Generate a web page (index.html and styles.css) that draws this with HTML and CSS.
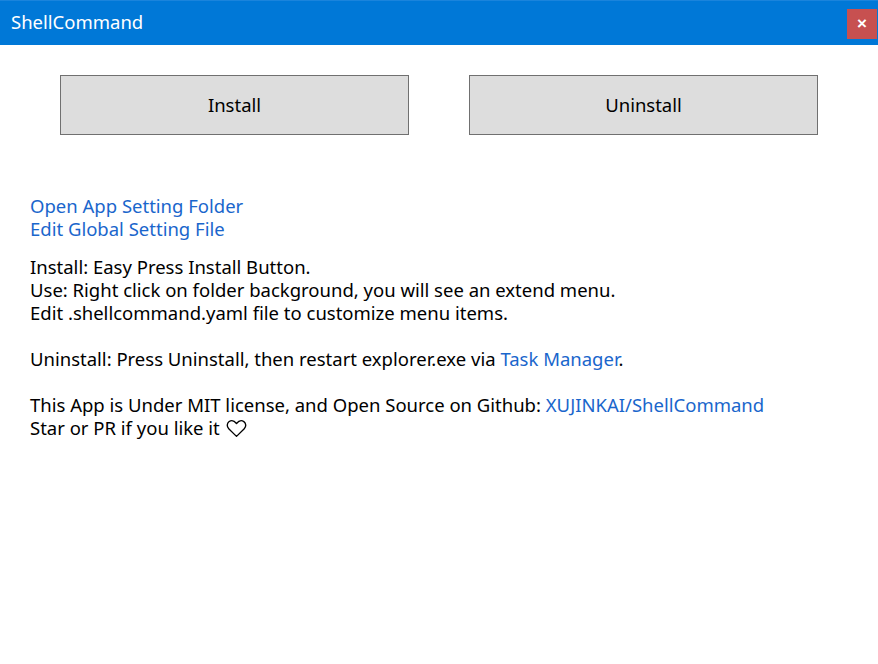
FILE: index.html
```html
<!DOCTYPE html>
<html>
<head>
<meta charset="utf-8">
<link rel="stylesheet" href="styles.css">
</head>
<body>
<div class="window">
  <header class="titlebar">
    <span class="title">ShellCommand</span>
    <button class="close">×</button>
  </header>
  <main class="content">
    <div class="buttons">
      <button class="btn">Install</button>
      <button class="btn">Uninstall</button>
    </div>
    <div class="links">
      <a class="link">Open App Setting Folder</a>
      <a class="link">Edit Global Setting File</a>
    </div>
    <div class="text">
      <p>Install: Easy Press Install Button.<br>Use: Right click on folder background, you will see an extend menu.<br>Edit .shellcommand.yaml file to customize menu items.</p>
      <p>Uninstall: Press Uninstall, then restart explorer.exe via <a class="link">Task Manager</a>.</p>
      <p>This App is Under MIT license, and Open Source on Github: <a class="link">XUJINKAI/ShellCommand</a><br>Star or PR if you like it <svg class="heart" width="21" height="19" viewBox="0 0 20 18"><path d="M10 16.5 L2.6 9.2 C0.6 7.2 0.8 4 3 2.4 C5 1 7.8 1.5 10 4.2 C12.2 1.5 15 1 17 2.4 C19.2 4 19.4 7.2 17.4 9.2 Z" fill="none" stroke="#000" stroke-width="1.3" stroke-linejoin="round"/></svg></p>
    </div>
  </main>
</div>
</body>
</html>
```
FILE: styles.css
```css
* { box-sizing: border-box; }
html, body { margin: 0; padding: 0; background: #fff; }
body { font-family: "Segoe UI", "Noto Sans", "Open Sans", sans-serif; color: #000; }
.window { width: 878px; height: 664px; display: flex; flex-direction: column; }
.titlebar {
  height: 45px; background: #0078d7; border-top: 1px solid #1a84dc;
  display: flex; align-items: center; justify-content: space-between;
  padding: 0 1px 0 11px;
}
.title { color: #fff; font-size: 18.5px; margin-top: -4px; }
.close {
  width: 30px; height: 30px; background: #c75050; border: none; color: #fff;
  font-size: 17px; font-weight: bold; padding: 0; margin-top: 2px; line-height: 30px;
}
.content { padding: 30px 30px 0 30px; }
.buttons { display: flex; gap: 60px; padding: 0 30px; }
.btn {
  width: 349px; height: 60px; background: #dddddd; border: 1px solid #707070;
  font-family: inherit; font-size: 18.5px; color: #000; padding: 0 0 2px 0;
}
.links { margin-top: 59px; display: flex; flex-direction: column; }
.link { color: #1a66cc; font-size: 18.5px; line-height: 23px; }
.text { margin-top: 15px; font-size: 18.5px; line-height: 23px; }
.text p { margin: 0 0 23px 0; }
.heart { vertical-align: -3px; margin-left: 1px; }
```
